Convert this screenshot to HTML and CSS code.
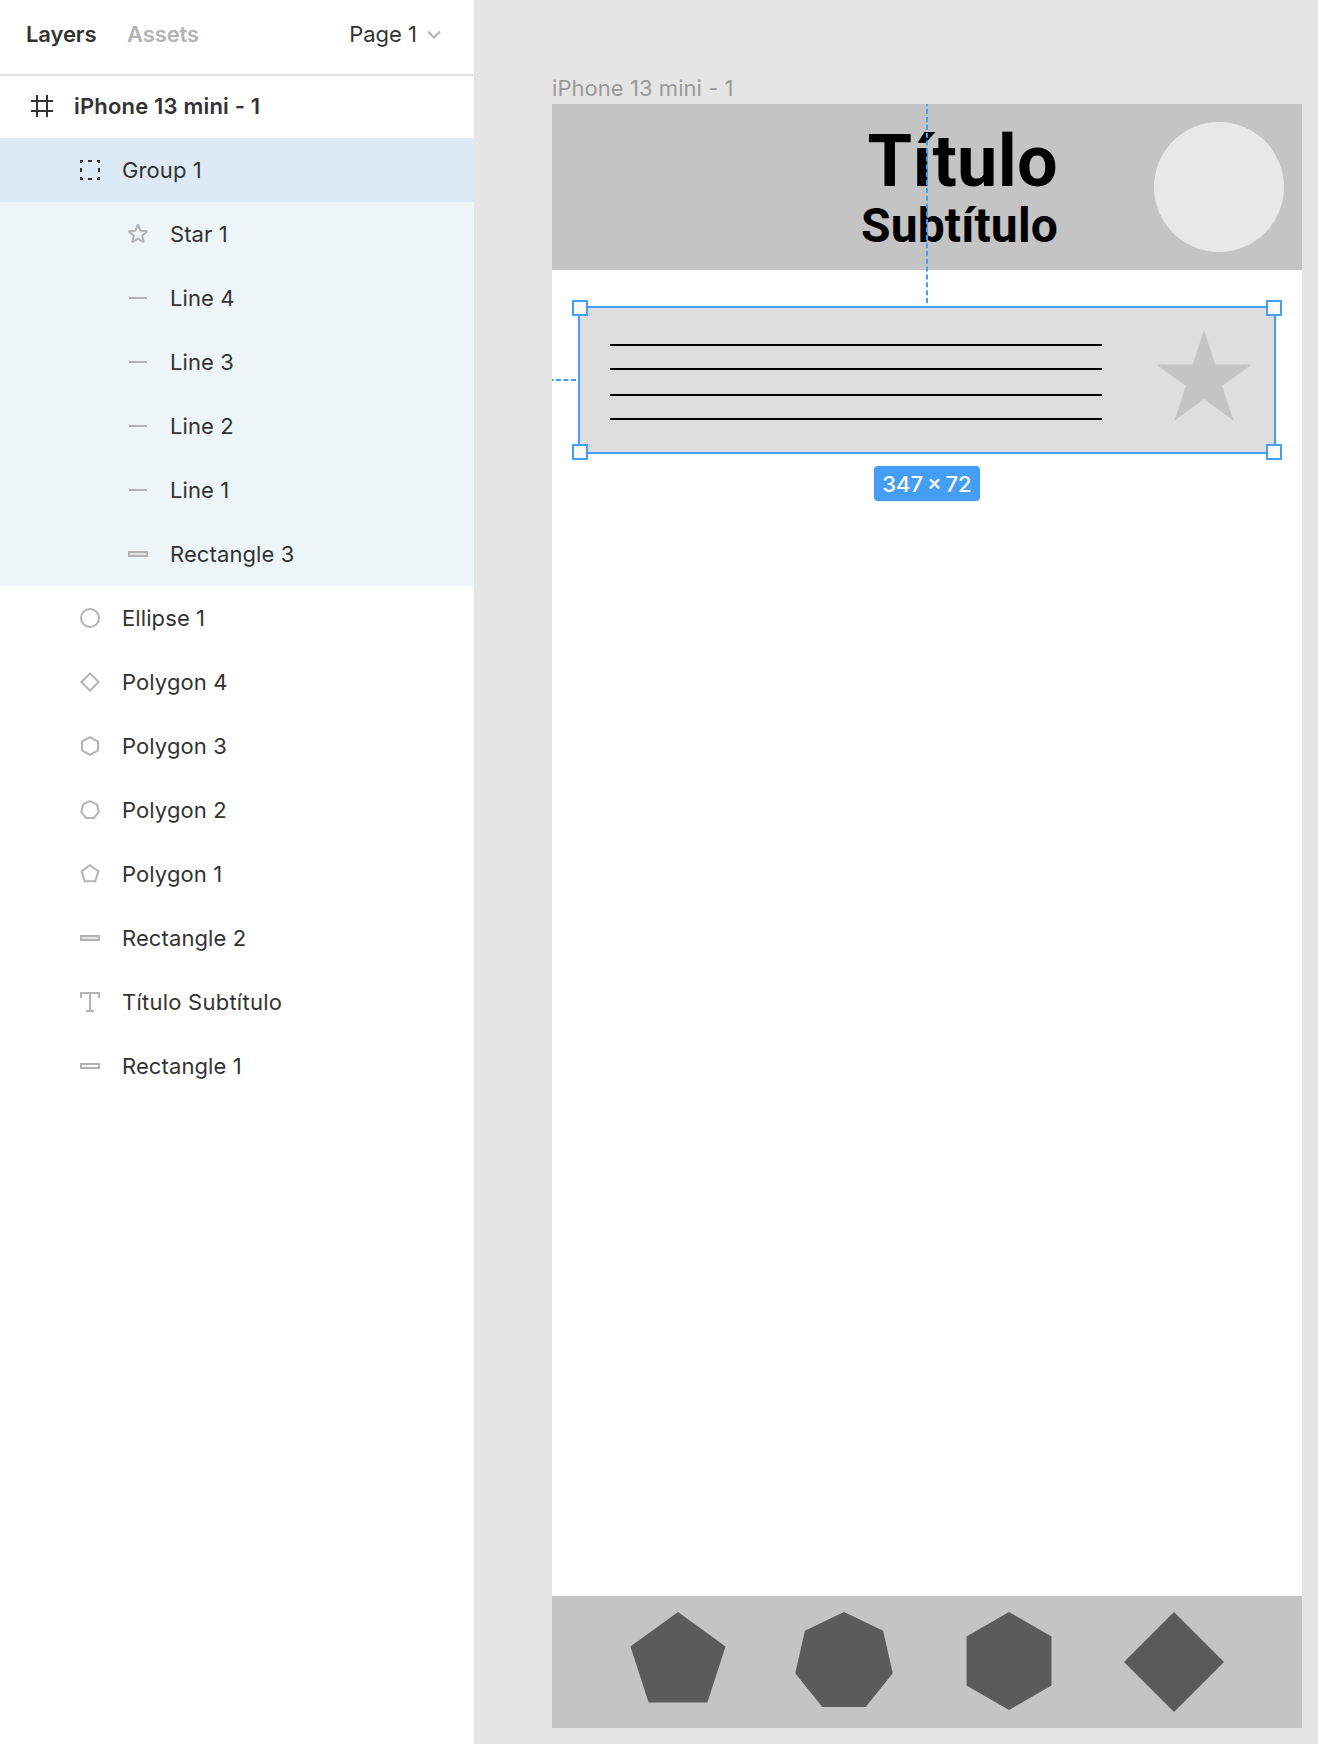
FILE: index.html
```html
<!DOCTYPE html>
<html lang="en">
<head>
<meta charset="utf-8">
<title>Layers</title>
<link rel="stylesheet" href="styles.css">
</head>
<body>
<div class="app">
  <aside class="sidebar">
    <header class="tabs">
      <span class="tab tab-active">Layers</span>
      <span class="tab tab-muted">Assets</span>
      <span class="page">Page 1</span>
      <svg class="chevron" width="14" height="10" viewBox="0 0 14 10"><path d="M1 1.5l6 6 6-6"/></svg>
    </header>
    <ul class="layers">
      <li class="layer frame-layer"><svg class="icon dark" viewBox="0 0 24 24"><path d="M7 1v22M17 1v22M1 7h22M1 17h22"/></svg><span class="label">iPhone 13 mini - 1</span></li>
      <li class="layer level-1 selected"><svg class="icon solid" viewBox="0 0 24 24"><path d="M2 2h3v2h-1v1h-2zM22 2v3h-2v-1h-1v-2zM2 22v-3h2v1h1v2zM22 22h-3v-2h1v-1h2zM10 2h4v2h-4zM10 20h4v2h-4zM2 10h2v4h-2zM20 10h2v4h-2z"/></svg><span class="label">Group 1</span></li>
      <li class="layer level-2"><svg class="icon blunt" viewBox="0 0 24 24"><path d="M12 2.5L14.59 8.74L21.32 9.27L16.18 13.66L17.76 20.23L12 16.7L6.24 20.23L7.82 13.66L2.68 9.27L9.41 8.74z"/></svg><span class="label">Star 1</span></li>
      <li class="layer level-2"><svg class="icon" viewBox="0 0 24 24"><path d="M3 12h18"/></svg><span class="label">Line 4</span></li>
      <li class="layer level-2"><svg class="icon" viewBox="0 0 24 24"><path d="M3 12h18"/></svg><span class="label">Line 3</span></li>
      <li class="layer level-2"><svg class="icon" viewBox="0 0 24 24"><path d="M3 12h18"/></svg><span class="label">Line 2</span></li>
      <li class="layer level-2"><svg class="icon" viewBox="0 0 24 24"><path d="M3 12h18"/></svg><span class="label">Line 1</span></li>
      <li class="layer level-2"><svg class="icon" viewBox="0 0 24 24"><path class="tint" d="M3 10h18v4H3z"/></svg><span class="label">Rectangle 3</span></li>
      <li class="layer level-1"><svg class="icon" viewBox="0 0 24 24"><circle cx="12" cy="12" r="9"/></svg><span class="label">Ellipse 1</span></li>
      <li class="layer level-1"><svg class="icon" viewBox="0 0 24 24"><path d="M12 3.4L20.6 12L12 20.6L3.4 12z"/></svg><span class="label">Polygon 4</span></li>
      <li class="layer level-1"><svg class="icon" viewBox="0 0 24 24"><path d="M12 3.2L20 7.6V16.4L12 20.8L4 16.4V7.6z"/></svg><span class="label">Polygon 3</span></li>
      <li class="layer level-1"><svg class="icon" viewBox="0 0 24 24"><path d="M12 3.1L18.9 6.4L20.7 14L15.9 20H8.1L3.3 14L5.1 6.4z"/></svg><span class="label">Polygon 2</span></li>
      <li class="layer level-1"><svg class="icon" viewBox="0 0 24 24"><path d="M12 3.3L20.4 9.4L17.2 19.3H6.8L3.6 9.4z"/></svg><span class="label">Polygon 1</span></li>
      <li class="layer level-1"><svg class="icon" viewBox="0 0 24 24"><path class="tint" d="M3 10h18v4H3z"/></svg><span class="label">Rectangle 2</span></li>
      <li class="layer level-1"><svg class="icon" viewBox="0 0 24 24"><path d="M3 8V3h18v5M12 3v18M8 21h8"/></svg><span class="label text-label">Título Subtítulo</span></li>
      <li class="layer level-1"><svg class="icon" viewBox="0 0 24 24"><path d="M3 10h18v4H3z"/></svg><span class="label">Rectangle 1</span></li>
    </ul>
  </aside>
  <main class="canvas">
    <div class="frame-name">iPhone 13 mini - 1</div>
    <section class="frame">
      <header class="banner">
        <div class="headings">
          <h1 class="title">Título</h1>
          <h2 class="subtitle">Subtítulo</h2>
        </div>
        <div class="avatar"></div>
      </header>
      <div class="card">
        <div class="lines"><i class="line"></i><i class="line"></i><i class="line"></i><i class="line"></i></div>
        <svg class="star" width="100" height="100" viewBox="0 0 100 100"><path d="M50 0L61.23 34.55L97.55 34.55L68.16 55.9L79.39 90.45L50 69.1L20.61 90.45L31.84 55.9L2.45 34.55L38.77 34.55z"/></svg>
        <b class="handle nw"></b><b class="handle ne"></b><b class="handle sw"></b><b class="handle se"></b>
      </div>
      <div class="size">347 × 72</div>
      <svg class="guides" width="376" height="280" viewBox="0 0 376 280"><path class="guide-y" d="M375 199V0"/><path class="guide-x" d="M24 276H0"/></svg>
      <footer class="dock">
        <svg width="100" height="100" viewBox="0 0 100 100"><path d="M50 0L97.55 34.55L79.39 90.45H20.61L2.45 34.55z"/></svg>
        <svg width="100" height="100" viewBox="0 0 100 100"><path d="M50 0L89.09 18.83L98.75 61.13L71.69 95.05H28.31L1.25 61.13L10.91 18.83z"/></svg>
        <svg width="98" height="100" viewBox="0 0 98 100"><path d="M49 0L91.44 24.5V73.5L49 98L6.56 73.5V24.5z"/></svg>
        <svg width="100" height="100" viewBox="0 0 100 100"><path d="M50 0L100 50L50 100L0 50z"/></svg>
      </footer>
    </section>
  </main>
</div>
</body>
</html>
```
FILE: styles.css
```css
* { box-sizing: border-box; }
body { margin: 0; background: #e5e5e5; font-family: Inter, "Liberation Sans", sans-serif; font-size: 22px; color: #333; }
.app { display: flex; height: 1744px; overflow: hidden; }
.sidebar { width: 474px; flex: none; background: #fff; }
.tabs { display: flex; align-items: center; height: 76px; padding: 0 33px 6px 26px; border-bottom: 2px solid #e5e5e5; }
.tab { font-weight: 600; letter-spacing: -.1px; }
.tab-active { width: 101px; }
.tab-muted { color: #b3b3b3; }
.page { margin-left: auto; margin-right: 10px; }
.chevron { fill: none; stroke: #b3b3b3; stroke-width: 2; margin-top: 2px; }
.layers { margin: 0; padding: 0; list-style: none; }
.layer { display: flex; align-items: center; gap: 20px; height: 64px; padding-left: 30px; letter-spacing: .1px; }
.frame-layer { height: 62px; padding-bottom: 2px; font-weight: 600; letter-spacing: .18px; }
.text-label { letter-spacing: .24px; }
.level-1 { padding-left: 78px; }
.level-2 { padding-left: 126px; background: #edf5f8; }
.selected { background: #ddeaf5; }
.icon { width: 24px; height: 24px; fill: none; stroke: #b3b3b3; stroke-width: 2; }
.dark { stroke: #333; }
.solid { fill: #333; stroke: none; }
.blunt { stroke-linejoin: bevel; }
.tint { fill: #e3e3e3; }
.canvas { padding: 74px 0 0 78px; }
.frame-name { height: 30px; line-height: 28px; color: #999; letter-spacing: .05px; }
.frame { position: relative; display: flex; flex-direction: column; width: 750px; height: 1624px; background: #fff; }
.banner { display: flex; justify-content: flex-end; gap: 96px; height: 166px; padding: 18px 18px 0 0; background: #c4c4c4; }
.headings { padding-top: 1px; font-family: Roboto, sans-serif; text-align: right; color: #000; }
.title, .subtitle { margin: 0; font-weight: 700; }
.title { font-size: 72px; line-height: 78px; letter-spacing: .3px; }
.subtitle { font-size: 48px; line-height: 50px; letter-spacing: .15px; }
.avatar { width: 130px; height: 130px; border-radius: 50%; background: #e8e8e8; }
.card { position: relative; display: flex; justify-content: space-between; width: 698px; height: 148px; margin: 36px 0 0 26px; padding: 22px 20px 0 30px; border: 2px solid #459ef5; background: #dedede; }
.lines { display: grid; grid-template-rows: 24px 26px 24px 2px; width: 492px; padding-top: 14px; }
.line { height: 2px; background: #000; }
.star { fill: #c4c4c4; }
.handle { position: absolute; width: 16px; height: 16px; border: 2px solid #459ef5; background: #fcfcfc; }
.nw { left: -8px; top: -8px; }
.ne { right: -8px; top: -8px; }
.sw { left: -8px; bottom: -8px; }
.se { right: -8px; bottom: -8px; }
.size { align-self: center; width: 106px; height: 35px; margin-top: 12px; border-radius: 4px; background: #459ef5; color: #fff; font-weight: 500; line-height: 37px; text-align: center; white-space: nowrap; word-spacing: -2px; }
.guides { position: absolute; left: 0; top: 0; fill: none; stroke: #459ef5; stroke-width: 2; }
.guide-y { stroke-dasharray: 5 2.875; }
.guide-x { stroke-dasharray: 5 2.5; }
.dock { display: flex; align-items: flex-start; height: 132px; margin-top: auto; padding: 16px 0 0 76px; gap: 66px; background: #c4c4c4; fill: #5b5b5b; }
```
